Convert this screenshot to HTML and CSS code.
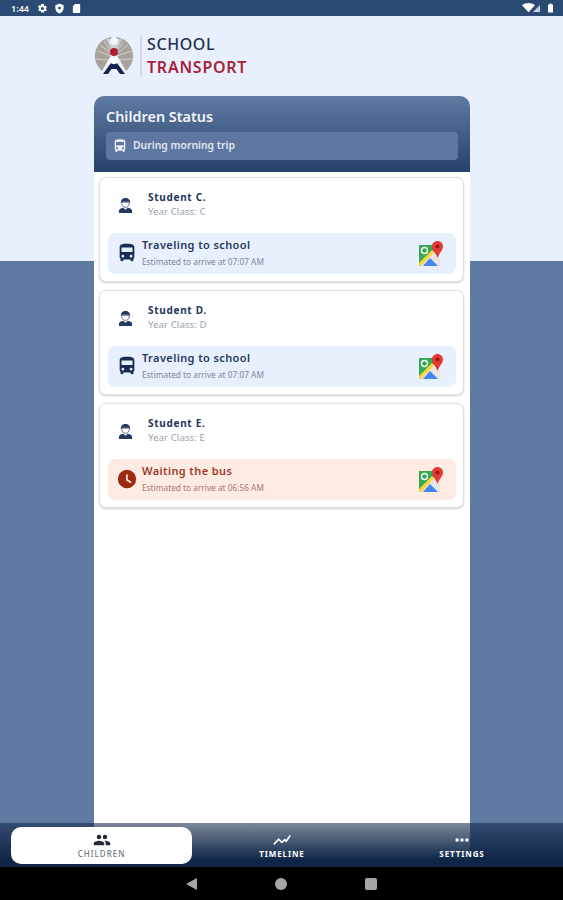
FILE: index.html
```html
<!DOCTYPE html>
<html lang="en">
<head>
  <meta charset="UTF-8">
  <meta name="viewport" content="width=device-width, initial-scale=1.0">
  <title>School Transport</title>
  <link rel="stylesheet" href="styles.css">
</head>
<body>
  <svg class="icon-defs" width="0" height="0">
    <defs>
      <symbol id="student" viewBox="0 0 16 18">
        <path d="M3 6.500C3 2.500 5 1 8 1s5 1.500 5 5.500l-1.500-1.500h-7z" fill="#24395e"/>
        <path d="M4 5.500h8v1c0 2.800-1.800 4.500-4 4.500S4 9.300 4 6.500z" fill="#fff" stroke="#24395e" stroke-width="0.700"/>
        <path d="M1 17v-2.500C1 12.700 3 11.800 5.500 11.300L8 13.500l2.500-2.200c2.500.5 4.500 1.400 4.500 3.200V17z" fill="#24395e"/>
      </symbol>
      <symbol id="bus" viewBox="0 0 24 24">
        <path d="M4 16c0 .88.39 1.670 1 2.220V20c0 .55.45 1 1 1h1c.55 0 1-.45 1-1v-1h8v1c0 .55.45 1 1 1h1c.55 0 1-.45 1-1v-1.780c.61-.55 1-1.340 1-2.220V6c0-3.500-3.580-4-8-4s-8 .5-8 4v10zm3.500 1c-.83 0-1.500-.67-1.500-1.500S6.670 14 7.500 14s1.500.67 1.500 1.500S8.330 17 7.500 17zm9 0c-.83 0-1.500-.67-1.500-1.500s.67-1.500 1.500-1.500 1.500.67 1.500 1.500-.67 1.500-1.500 1.500zm1.500-6H6V6h12v5z"/>
      </symbol>
      <symbol id="maps" viewBox="0 0 26 26">
        <path d="M1 4h17v21H1z" fill="#34a853"/>
        <path d="M1 25l15-15 6 6v9z" fill="#e8e6df"/>
        <path d="M1 22L14 9l2 2L3 25H1z" fill="#fbd437"/>
        <path d="M5 25l7-8 8 8z" fill="#4285f4"/>
        <circle cx="6.500" cy="9.500" r="3" fill="none" stroke="#fff" stroke-width="1.400"/>
        <path d="M19.500 0C16.500 0 14 2.400 14 5.400c0 3.800 4.200 6.800 5.500 11.600C20.800 12.200 25 9.200 25 5.400 25 2.400 22.500 0 19.500 0z" fill="#e53935"/>
        <circle cx="19.500" cy="5.400" r="1.900" fill="#8e1b16"/>
      </symbol>
    </defs>
  </svg>

  <div class="status-bar">
    <span class="clock">1:44</span>
    <svg class="status-icon" viewBox="0 0 24 24"><path d="M19.400 13a7.500 7.500 0 0 0 0-2l2.100-1.600-2-3.500-2.500 1a7.500 7.500 0 0 0-1.700-1L15 2.200h-6l-.4 2.700a7.500 7.500 0 0 0-1.700 1l-2.500-1-2 3.500L4.500 11a7.500 7.500 0 0 0 0 2l-2.100 1.600 2 3.500 2.500-1a7.500 7.500 0 0 0 1.700 1l.4 2.700h6l.4-2.700a7.500 7.500 0 0 0 1.700-1l2.500 1 2-3.500zM12 15.500a3.500 3.500 0 1 1 0-7 3.500 3.500 0 0 1 0 7z"/></svg>
    <svg class="status-icon" viewBox="0 0 24 24"><path fill-rule="evenodd" d="M12 1L3 5v6c0 5.500 3.800 10.700 9 12 5.200-1.300 9-6.500 9-12V5zm0 7a3 3 0 1 1 0 6 3 3 0 0 1 0-6z"/></svg>
    <svg class="status-icon" viewBox="0 0 24 24"><path d="M9 2L4 7v13a2 2 0 0 0 2 2h12a2 2 0 0 0 2-2V4a2 2 0 0 0-2-2z"/></svg>
    <span class="status-spacer"></span>
    <svg class="status-icon wide" viewBox="0 0 24 18"><path d="M12 17L0 4c7-5.500 17-5.500 24 0z"/></svg>
    <svg class="status-icon small" viewBox="0 0 12 12"><path d="M0 12L12 0v12z" opacity="0.75"/></svg>
    <svg class="status-icon battery" viewBox="0 0 10 18"><path d="M3 0h4v2h3v16H0V2h3z"/></svg>
  </div>

  <main class="main">
    <div class="content">
      <div class="logo">
        <svg class="logo-mark" viewBox="0 0 40 40">
          <path d="M20 1C9 1 1 9 1 20c0 6 2.500 11 7 15l9-16a4 4 0 0 1 6 0l9 16c4.500-4 7-9 7-15C39 9 31 1 20 1z" fill="#a9a297"/>
          <path d="M10 5l8 12M30 5l-8 12M3 15l14 5M37 15l-14 5M6 9l12 9M34 9l-12 9M2 23l12 1M38 23l-12 1" stroke="#e8f0fe" stroke-width="0.600"/>
          <path d="M20 3L12 3l6 13h4l6-13z" fill="#e8f0fe" opacity="0.6"/>
          <circle cx="20" cy="5" r="4" fill="#f2f5fa"/>
          <circle cx="20" cy="16" r="4" fill="#b01f30"/>
          <circle cx="20" cy="26" r="4.500" fill="#fff"/>
          <path d="M9 38l8-11c1 1.500 5 1.500 6 0l8 11h-5l-3.500-5h-5L14 38z" fill="#14234c"/>
        </svg>
        <div class="logo-text">
          <div class="logo-school">SCHOOL</div>
          <div class="logo-transport">TRANSPORT</div>
        </div>
      </div>

      <section class="panel">
        <div class="panel-head">
          <h1>Children Status</h1>
          <div class="trip">
            <svg class="trip-icon"><use href="#bus"/></svg>
            <span>During morning trip</span>
          </div>
        </div>

        <div class="cards">
          <div class="card">
            <div class="student">
              <svg class="student-icon"><use href="#student"/></svg>
              <div>
                <div class="student-name">Student C.</div>
                <div class="student-class">Year Class: C</div>
              </div>
            </div>
            <div class="state">
              <svg class="state-icon"><use href="#bus"/></svg>
              <div class="state-text">
                <div class="state-title">Traveling to school</div>
                <div class="state-eta">Estimated to arrive at 07:07 AM</div>
              </div>
              <svg class="maps-icon"><use href="#maps"/></svg>
            </div>
          </div>

          <div class="card">
            <div class="student">
              <svg class="student-icon"><use href="#student"/></svg>
              <div>
                <div class="student-name">Student D.</div>
                <div class="student-class">Year Class: D</div>
              </div>
            </div>
            <div class="state">
              <svg class="state-icon"><use href="#bus"/></svg>
              <div class="state-text">
                <div class="state-title">Traveling to school</div>
                <div class="state-eta">Estimated to arrive at 07:07 AM</div>
              </div>
              <svg class="maps-icon"><use href="#maps"/></svg>
            </div>
          </div>

          <div class="card">
            <div class="student">
              <svg class="student-icon"><use href="#student"/></svg>
              <div>
                <div class="student-name">Student E.</div>
                <div class="student-class">Year Class: E</div>
              </div>
            </div>
            <div class="state waiting">
              <svg class="state-icon" viewBox="0 0 24 24"><path d="M12 2a10 10 0 1 0 0 20 10 10 0 0 0 0-20zm4 14.500l-5-3V7h1.800v5.500l4.200 2.500z"/></svg>
              <div class="state-text">
                <div class="state-title">Waiting the bus</div>
                <div class="state-eta">Estimated to arrive at 06:56 AM</div>
              </div>
              <svg class="maps-icon"><use href="#maps"/></svg>
            </div>
          </div>
        </div>
      </section>
    </div>
  </main>

  <nav class="tabs">
    <div class="tab active">
      <svg class="tab-icon" viewBox="0 0 24 24"><path d="M16 11a3 3 0 1 0 0-6 3 3 0 0 0 0 6zm-8 0a3 3 0 1 0 0-6 3 3 0 0 0 0 6zm0 2c-2.300 0-7 1.200-7 3.500V19h14v-2.500C15 14.200 10.300 13 8 13zm8 0h-1c1.200.9 2 2 2 3.500V19h6v-2.500c0-2.300-4.700-3.500-7-3.500z"/></svg>
      <span>CHILDREN</span>
    </div>
    <div class="tab">
      <svg class="tab-icon" viewBox="0 0 24 24"><path d="M1 18l6.500-7 4.500 4 3.500-3.500 2 2L23 6" fill="none" stroke="currentColor" stroke-width="2.200"/></svg>
      <span>TIMELINE</span>
    </div>
    <div class="tab">
      <svg class="tab-icon" viewBox="0 0 24 24"><path d="M3.500 10h4v4h-4zm6.500 0h4v4h-4zm6.500 0h4v4h-4z"/></svg>
      <span>SETTINGS</span>
    </div>
  </nav>

  <div class="system-nav">
    <span class="nav-back"></span>
    <span class="nav-home"></span>
    <span class="nav-recent"></span>
  </div>
</body>
</html>
```

FILE: styles.css
```css
* {
  box-sizing: border-box;
}
html,
body {
  margin: 0;
  height: 900px;
  overflow: hidden;
}
body {
  display: flex;
  flex-direction: column;
  font-family: "Noto Sans", "Open Sans", sans-serif;
  background: #000;
}
.icon-defs {
  position: absolute;
}

/* status bar */
.status-bar {
  height: 16px;
  flex: none;
  display: flex;
  align-items: center;
  gap: 6px;
  padding: 0 10px 0 11px;
  background: #2b4a73;
  color: #fff;
  fill: #fff;
}
.clock {
  font-size: 9px;
  font-weight: 600;
  margin-right: 2px;
}
.status-icon {
  width: 11px;
  height: 11px;
}
.status-icon.wide {
  width: 13px;
  height: 10px;
}
.status-icon.small {
  width: 7px;
  height: 7px;
  margin-left: -8px;
  margin-top: 1px;
}
.status-icon.battery {
  width: 5px;
  height: 10px;
  margin-left: 2px;
}
.status-spacer {
  flex: 1;
}

/* main area runs under the translucent tab bar */
.main {
  flex: 1;
  min-height: 0;
  margin-bottom: -44px;
  background: linear-gradient(#e8f0fe 245px, #5f7aa3 245px);
}
.content {
  width: 376px;
  height: 100%;
  margin-left: 94px;
  display: flex;
  flex-direction: column;
}
.logo {
  height: 80px;
  flex: none;
  display: flex;
  align-items: center;
  padding-bottom: 1px;
}
.logo-mark {
  width: 40px;
  height: 40px;
  margin-right: 6px;
}
.logo-text {
  border-left: 2px solid #d5d9e6;
  padding-left: 5px;
  height: 42px;
}
.logo-school {
  font-size: 16px;
  line-height: 23px;
  margin-top: -2px;
  font-weight: 500;
  letter-spacing: 0.6px;
  color: #1f3150;
}
.logo-transport {
  font-size: 16px;
  line-height: 23px;
  font-weight: 600;
  letter-spacing: 0.75px;
  color: #a81f38;
}

/* panel */
.panel {
  flex: 1;
  min-height: 0;
  background: #fff;
  border-radius: 10px 10px 0 0;
}
.panel-head {
  height: 76px;
  padding: 10px 12px 0;
  border-radius: 10px 10px 0 0;
  background: linear-gradient(#5f7aa3, #26426b);
  color: #fff;
}
.panel-head h1 {
  margin: 0 0 5px;
  font-size: 14.400px;
  line-height: 21px;
  font-weight: 600;
  color: #f2f5fa;
}
.trip {
  height: 28px;
  display: flex;
  align-items: center;
  gap: 6px;
  padding: 0 7px 2px;
  border-radius: 4px;
  background: #5d77a0;
  font-size: 10.400px;
  font-weight: 600;
  color: #e4e9f2;
}
.trip-icon {
  width: 16px;
  height: 16px;
  margin: 2px -1px 0;
  fill: #e8edf5;
}

/* student cards */
.cards {
  display: flex;
  flex-direction: column;
  gap: 8px;
  padding: 5px 6px 0 5px;
}
.card {
  height: 105px;
  padding: 0 7px 0 8px;
  background: #fff;
  border: 1px solid #dde1e7;
  border-radius: 7px;
  box-shadow: 0 1px 2px rgba(60, 70, 90, 0.25);
}
.student {
  height: 55px;
  display: flex;
  align-items: center;
  gap: 15px;
  padding: 0 0 2px 10px;
}
.student-icon {
  width: 15px;
  height: 17px;
  margin-top: 2px;
}
.student-name {
  font-size: 10px;
  line-height: 15px;
  font-weight: 700;
  letter-spacing: 0.7px;
  color: #22355a;
}
.student-class {
  font-size: 9.800px;
  line-height: 14px;
  color: #9aa3b2;
}
.state {
  height: 41px;
  display: flex;
  align-items: center;
  padding: 0 12px 0 8px;
  border-radius: 7px;
  background: #e8f0fe;
  color: #24395e;
  fill: #1a2c52;
}
.state-icon {
  width: 22px;
  height: 22px;
  margin: 0 4px 1px 0;
  flex: none;
}
.state-text {
  flex: 1;
  padding-bottom: 4px;
}
.state-title {
  font-size: 11px;
  line-height: 16px;
  font-weight: 600;
  letter-spacing: 0.4px;
  margin-bottom: 3px;
}
.state-eta {
  font-size: 8.300px;
  line-height: 11px;
  color: #7c8698;
}
.maps-icon {
  width: 26px;
  height: 26px;
  flex: none;
}
.state.waiting {
  background: #fdebe4;
  color: #a33a28;
  fill: #9c2c10;
}
.state.waiting .state-eta {
  color: #a8776c;
}

/* bottom tabs */
.tabs {
  position: relative;
  height: 44px;
  flex: none;
  display: flex;
  padding: 4px 11px 3px;
  background: linear-gradient(rgba(14, 37, 71, 0.55), #0e2547 85%);
  color: #fff;
  fill: #fff;
}
.tab {
  flex: 1;
  display: flex;
  flex-direction: column;
  align-items: center;
  justify-content: center;
  border-radius: 10px;
  font-size: 8px;
  font-weight: 700;
  letter-spacing: 0.9px;
}
.tab-icon {
  width: 18px;
  height: 18px;
  margin: -2px 0 -1px;
}
.tab.active {
  flex: none;
  width: 181px;
  background: #fff;
  color: #6f7680;
  fill: #222b3a;
  font-weight: 500;
  letter-spacing: 1px;
}

/* android nav */
.system-nav {
  height: 33px;
  flex: none;
  display: flex;
  align-items: center;
  justify-content: center;
  gap: 78px;
  background: #000;
}
.nav-back {
  width: 0;
  height: 0;
  border-top: 6px solid transparent;
  border-bottom: 6px solid transparent;
  border-right: 11px solid #a5a5a5;
}
.nav-home {
  width: 12px;
  height: 12px;
  border-radius: 50%;
  background: #a5a5a5;
}
.nav-recent {
  width: 12px;
  height: 12px;
  border-radius: 2px;
  background: #a5a5a5;
}
```
